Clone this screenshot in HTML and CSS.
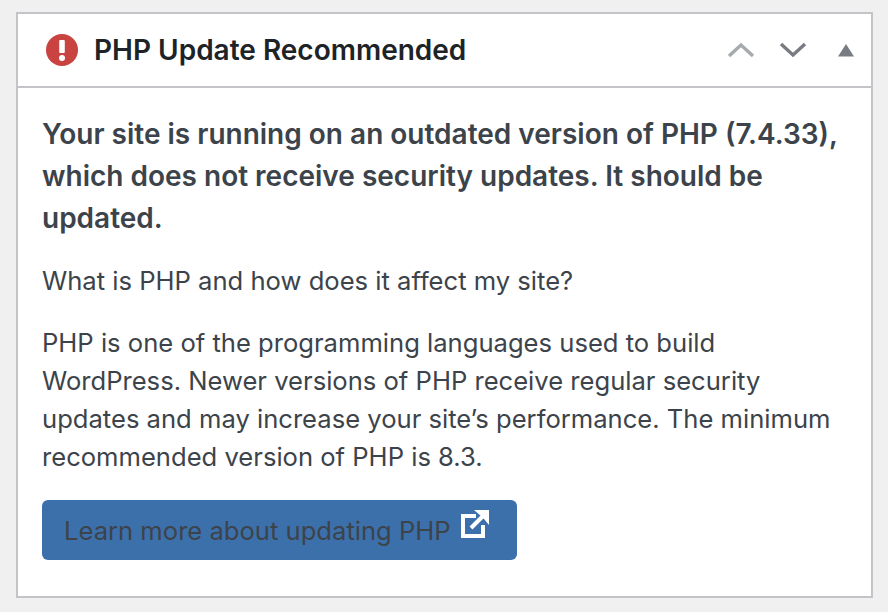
FILE: index.html
```html
<!DOCTYPE html>
<html lang="en">
<head>
<meta charset="utf-8">
<title>PHP Update Recommended</title>
<link rel="stylesheet" href="styles.css">
</head>
<body>
<section class="card">
  <header class="head">
    <svg class="alert" viewBox="0 0 32 32" aria-hidden="true"><circle cx="16" cy="16" r="16" fill="#c94340"/><rect x="13.2" y="6" width="5.6" height="13" rx="1" fill="#fff"/><circle cx="16" cy="24" r="3" fill="#fff"/></svg>
    <h2 class="title">PHP Update Recommended</h2>
    <div class="controls">
      <svg class="chev" viewBox="0 0 28 16" aria-hidden="true"><path d="M2 14 14 3l12 11" fill="none" stroke="#a7aaad" stroke-width="3.4"/></svg>
      <svg class="chev" viewBox="0 0 28 16" aria-hidden="true"><path d="M2 2l12 11L26 2" fill="none" stroke="#787c82" stroke-width="3.4"/></svg>
      <svg class="tri" viewBox="0 0 16 13" aria-hidden="true"><path d="M8 0l8 12.5H0z" fill="#787c82"/></svg>
    </div>
  </header>
  <div class="body">
    <p class="lead">Your site is running on an outdated version of PHP (7.4.33), which does not receive security updates. It should be updated.</p>
    <p class="text">What is PHP and how does it affect my site?</p>
    <p class="text">PHP is one of the programming languages used to build WordPress. Newer versions of PHP receive regular security updates and may increase your site’s performance. The minimum recommended version of PHP is 8.3.</p>
    <a class="btn" href="#">Learn more about updating PHP
      <svg class="ext" viewBox="0 0 28 28" aria-hidden="true"><path d="M15 6H2v20h20V15" fill="none" stroke="#fff" stroke-width="4"/><path d="M10 18 22 6" fill="none" stroke="#fff" stroke-width="4"/><path d="M13 0h15v15l-5-6-3-3z" fill="#fff"/></svg>
    </a>
  </div>
</section>
</body>
</html>
```
FILE: styles.css
```css
html, body { height: 100%; }
body {
  margin: 0;
  padding: 12px 15px 14px 16px;
  box-sizing: border-box;
  background: #f0f0f1;
  font-family: Inter, "Liberation Sans", sans-serif;
  color: #3c434a;
}
.card {
  height: 100%;
  box-sizing: border-box;
  background: #fff;
  border: 2px solid #c3c4c7;
}
.head {
  display: flex;
  align-items: center;
  height: 72px;
  padding: 0 17px 0 28px;
  border-bottom: 2px solid #c3c4c7;
}
.alert { width: 32px; height: 32px; flex: none; }
.title {
  margin: 0 0 0 16px;
  font-size: 28px;
  font-weight: 600;
  color: #1d2327;
}
.controls {
  margin-left: auto;
  display: flex;
  align-items: center;
  gap: 24px;
}
.chev { width: 28px; height: 16px; }
.tri { width: 16px; height: 13px; margin-left: 7px; }
.body { padding: 25px 24px 0; }
.lead {
  margin: 0 0 23px;
  font-size: 28px;
  line-height: 42px;
  font-weight: 600;
}
.text {
  margin: 0 0 24px;
  font-size: 25.6px;
  line-height: 38px;
}
.btn {
  display: flex;
  align-items: center;
  width: 475px;
  height: 60px;
  box-sizing: border-box;
  padding-left: 22px;
  background: #3c70ab;
  border-radius: 6px;
  color: #3c434a;
  font-size: 25.6px;
  text-decoration: none;
}
.ext { width: 28px; height: 28px; margin: -12px 0 0 10px; }
```
